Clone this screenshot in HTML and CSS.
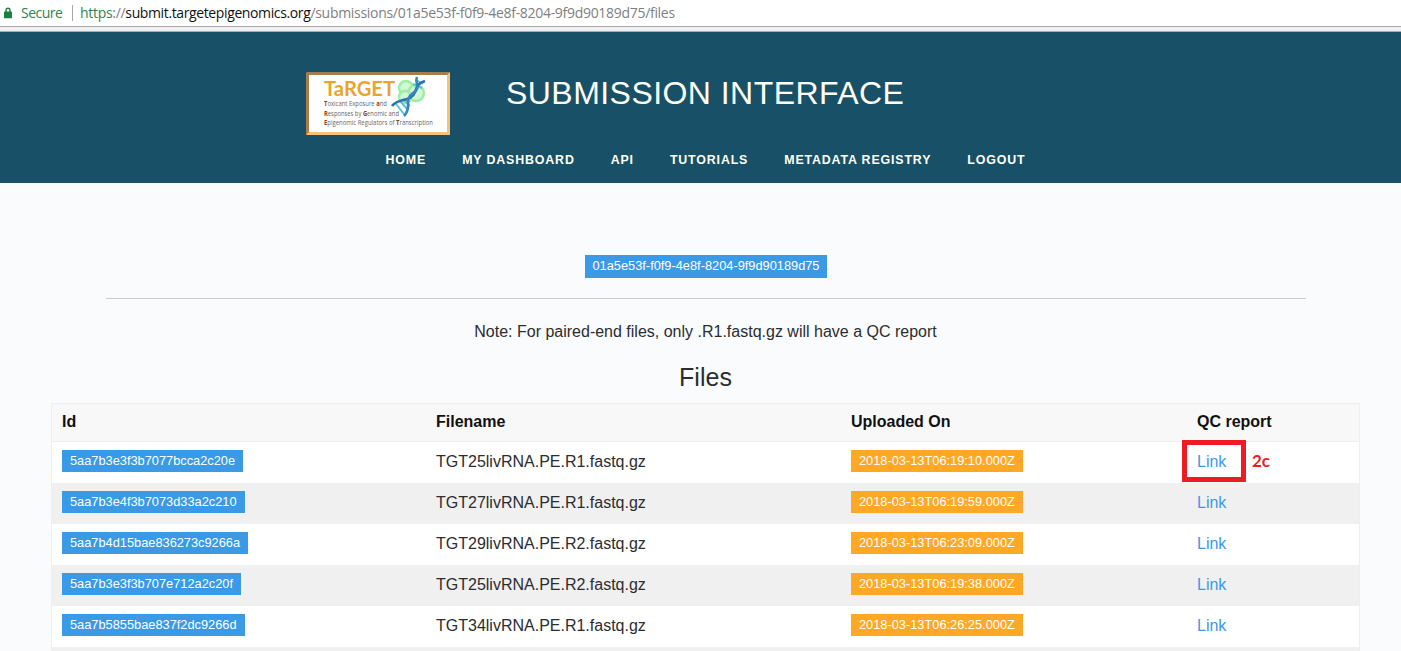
FILE: index.html
```html
<!DOCTYPE html>
<html lang="en">
<head>
<meta charset="utf-8">
<title>Submission Interface</title>
<link rel="stylesheet" href="styles.css">
</head>
<body>
<div class="address-bar">
  <svg class="lock" width="8" height="12" viewBox="0 0 8 12"><path d="M2 5V3.2a2 2 0 0 1 4 0V5" fill="none" stroke="#1b7f43" stroke-width="1.4"/><rect x="0" y="4.6" width="8" height="6.6" rx=".6" fill="#1b7f43"/></svg>
  <span class="secure">Secure</span>
  <span class="url"><span class="scheme">https</span>://<span class="host">submit.targetepigenomics.org</span><span class="path">/submissions/01a5e53f-f0f9-4e8f-8204-9f9d90189d75/files</span></span>
</div>
<header class="site-header">
  <div class="brand">
    <svg class="logo" width="144" height="63" viewBox="0 0 144 63">
      <rect width="144" height="63" rx="1.5" fill="#a67d4b"/>
      <path d="M144 0V63H0L3 60H141V3Z" fill="#f5c277"/>
      <rect x="3" y="3" width="138" height="57" fill="#fff"/>
      <g fill="#c9f7cd" stroke="#8eeb96" stroke-width="2.5" opacity=".85"><circle cx="100" cy="16" r="7"/><circle cx="110" cy="21" r="8"/><circle cx="99" cy="25" r="6"/></g>
      <path d="M90 32L98 42M94 29L102 38M97 27L104 34M107 12L116 16M110 8L117 12" stroke="#55c4d0" stroke-width="2"/>
      <path d="M86 34C92 25 105 31 109 20C111 13 113 11 119 9" fill="none" stroke="#2d70b5" stroke-width="2.6"/>
      <path d="M98 44C107 35 97 28 107 21C116 16 108 11 111 5" fill="none" stroke="#3685c2" stroke-width="2.6"/>
      <text class="logo-name" x="18" y="24" textLength="71" lengthAdjust="spacingAndGlyphs">TaRGET</text>
      <g class="logo-tag">
        <text x="18" y="34" textLength="63" lengthAdjust="spacingAndGlyphs"><tspan class="key">T</tspan>oxicant Exposure <tspan class="key">a</tspan>nd</text>
        <text x="18" y="43.5" textLength="75" lengthAdjust="spacingAndGlyphs"><tspan class="key">R</tspan>esponses by <tspan class="key">G</tspan>enomic and</text>
        <text x="18" y="53" textLength="109" lengthAdjust="spacingAndGlyphs"><tspan class="key">E</tspan>pigenomic Regulators of <tspan class="key">T</tspan>ranscription</text>
      </g>
    </svg>
    <h1 class="title">SUBMISSION INTERFACE</h1>
  </div>
  <nav class="nav"><a>HOME</a><a>MY DASHBOARD</a><a>API</a><a>TUTORIALS</a><a>METADATA REGISTRY</a><a>LOGOUT</a></nav>
</header>
<main class="content">
  <div class="submission"><span class="badge badge-lg">01a5e53f-f0f9-4e8f-8204-9f9d90189d75</span></div>
  <p class="note">Note: For paired-end files, only .R1.fastq.gz will have a QC report</p>
  <h2 class="heading">Files</h2>
  <div class="table">
    <div class="row head"><span>Id</span><span>Filename</span><span>Uploaded On</span><span>QC report</span></div>
    <div class="row"><span><b class="badge">5aa7b3e3f3b7077bcca2c20e</b></span><span>TGT25livRNA.PE.R1.fastq.gz</span><span><b class="badge date">2018-03-13T06:19:10.000Z</b></span><span class="marked"><a class="link">Link</a><i class="frame"></i><b class="step">2c</b></span></div>
    <div class="row alt"><span><b class="badge">5aa7b3e4f3b7073d33a2c210</b></span><span>TGT27livRNA.PE.R1.fastq.gz</span><span><b class="badge date">2018-03-13T06:19:59.000Z</b></span><span><a class="link">Link</a></span></div>
    <div class="row"><span><b class="badge">5aa7b4d15bae836273c9266a</b></span><span>TGT29livRNA.PE.R2.fastq.gz</span><span><b class="badge date">2018-03-13T06:23:09.000Z</b></span><span><a class="link">Link</a></span></div>
    <div class="row alt"><span><b class="badge">5aa7b3e3f3b707e712a2c20f</b></span><span>TGT25livRNA.PE.R2.fastq.gz</span><span><b class="badge date">2018-03-13T06:19:38.000Z</b></span><span><a class="link">Link</a></span></div>
    <div class="row"><span><b class="badge">5aa7b5855bae837f2dc9266d</b></span><span>TGT34livRNA.PE.R1.fastq.gz</span><span><b class="badge date">2018-03-13T06:26:25.000Z</b></span><span><a class="link">Link</a></span></div>
    <div class="row alt last"></div>
  </div>
</main>
</body>
</html>
```
FILE: styles.css
```css
* { box-sizing: border-box; }
body { margin: 0; height: 651px; overflow: hidden; background: #fafbfd; color: #2b2d2f; font: 16px/20px "Liberation Sans", Arial, sans-serif; }
.address-bar { height: 32px; display: flex; align-items: flex-start; background: linear-gradient(#fff 26px, #a5a5a5 26px, #a5a5a5 27px, #f0f0f0 27px, #f0f0f0 31px, #a3adb1 31px); font: 14px/26px "Open Sans", sans-serif; padding-left: 4px; white-space: nowrap; }
.lock { margin: 7px 9px 0 0; }
.secure { width: 52px; height: 16px; margin-top: 5px; line-height: 16px; color: #2c8553; border-right: 1px solid #a8a8a8; letter-spacing: -.5px; }
.url { margin-left: 7px; color: #808080; letter-spacing: -.3px; }
.scheme { color: #2c8553; }
.host { color: #111; letter-spacing: -.38px; }
.path { letter-spacing: -.3px; }
.site-header { height: 151px; background: #185067; color: #fffff4; }
.brand { display: flex; padding: 40px 0 0 306px; }
.logo { flex: none; }
.logo-name { font: bold 20px Lato, sans-serif; fill: #e9a331; }
.logo-tag { font: 7px "Open Sans", sans-serif; fill: #666; }
.key { font-weight: bold; fill: #8b4218; }
.title { margin: 3px 0 0 56px; font-size: 32px; font-weight: normal; line-height: 36px; letter-spacing: .45px; }
.nav { display: flex; justify-content: center; gap: 36px; margin-top: 17px; padding-left: 10px; font: bold 12.4px/16px "Liberation Sans", Arial, sans-serif; letter-spacing: .85px; }
.content { height: 468px; overflow: hidden; padding: 72px 41px 0 51px; }
.submission { display: flex; justify-content: center; height: 44px; margin: 0 55px; width: 1200px; border-bottom: 1px solid #c9cbcc; }
.badge { display: inline-block; height: 22px; padding: 0 8px; background: #3a9ae6; color: #fff; font-size: 12.8px; font-weight: normal; line-height: 21px; }
.badge-lg { height: 23px; line-height: 22px; }
.date { background: #ffa826; }
.note { margin: 23px 0 0; text-align: center; }
.heading { margin: 20px 0 0; text-align: center; font-size: 25px; font-weight: normal; line-height: 30px; }
.table { margin-top: 11px; border: 1px solid #eee; border-bottom: 0; background: #fff; }
.row { display: grid; grid-template-columns: 374px 415px 346px 1fr; align-items: center; height: 41px; padding: 0 0 2px 10px; }
.row > span { display: flex; align-items: center; position: relative; }
.row .badge { margin-top: -1px; }
.head { height: 38px; background: #f8f8f8; border-bottom: 1px solid #eee; color: #111; font-weight: bold; }
.alt { background: #f0f0f0; }
.last { height: 4px; }
.link { color: #3a9ae6; }
.frame { position: absolute; left: -15px; top: -12px; width: 64px; height: 42px; border: 5px solid #ed1c24; }
.step { position: absolute; left: 55px; top: -1px; color: #ed1c24; font: bold 17px/20px Lato, sans-serif; }
```
